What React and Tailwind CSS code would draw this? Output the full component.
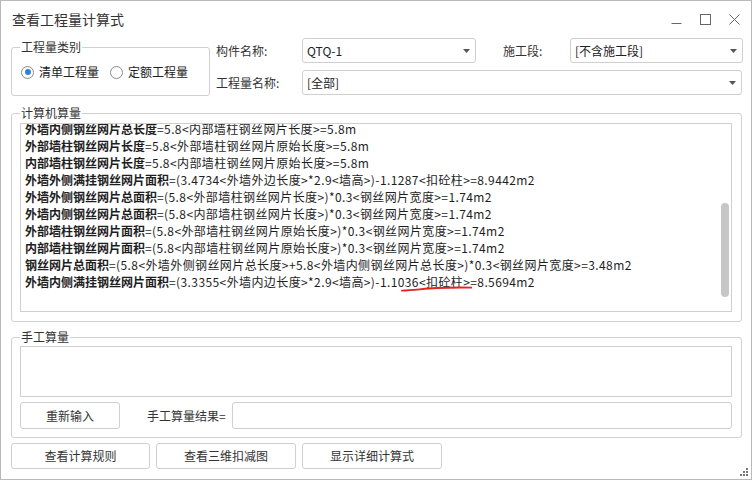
const FONT = { fontFamily: '"Noto Sans CJK SC", "Noto Sans", sans-serif' };

const lines = [
  ["外墙内侧钢丝网片总长度", "=5.8<内部墙柱钢丝网片长度>=5.8m"],
  ["外部墙柱钢丝网片长度", "=5.8<外部墙柱钢丝网片原始长度>=5.8m"],
  ["内部墙柱钢丝网片长度", "=5.8<内部墙柱钢丝网片原始长度>=5.8m"],
  ["外墙外侧满挂钢丝网片面积", "=(3.4734<外墙外边长度>*2.9<墙高>)-1.1287<扣砼柱>=8.9442m2"],
  ["外墙外侧钢丝网片总面积", "=(5.8<外部墙柱钢丝网片长度>)*0.3<钢丝网片宽度>=1.74m2"],
  ["外墙内侧钢丝网片总面积", "=(5.8<内部墙柱钢丝网片长度>)*0.3<钢丝网片宽度>=1.74m2"],
  ["外部墙柱钢丝网片面积", "=(5.8<外部墙柱钢丝网片原始长度>)*0.3<钢丝网片宽度>=1.74m2"],
  ["内部墙柱钢丝网片面积", "=(5.8<内部墙柱钢丝网片原始长度>)*0.3<钢丝网片宽度>=1.74m2"],
  ["钢丝网片总面积", "=(5.8<外墙外侧钢丝网片总长度>+5.8<外墙内侧钢丝网片总长度>)*0.3<钢丝网片宽度>=3.48m2"],
];

function Arrow() {
  return (
    <svg width="7" height="4" viewBox="0 0 7 4" className="mr-[4px]">
      <path d="M0 0 H7 L3.5 4 Z" fill="#555" />
    </svg>
  );
}

function Select({ value, className }) {
  return (
    <div className={"h-[25px] border border-[#cfcfcf] rounded-[3px] flex items-center justify-between pl-[4px] pr-[1px] text-[12px] text-[#222] " + className}>
      <span>{value}</span>
      <Arrow />
    </div>
  );
}

function Group({ title, className, children }) {
  return (
    <div className={"relative border border-[#d0d0d0] rounded-[3px] " + className}>
      <span className="absolute left-[8px] -top-[9px] bg-white px-[1px] text-[12px] leading-[16px] text-[#333]">{title}</span>
      {children}
    </div>
  );
}

function Radio({ checked, label }) {
  return (
    <label className="flex items-center gap-[5px]">
      <span className="w-[13px] h-[13px] rounded-full border border-[#8a8a8a] flex items-center justify-center bg-white">
        {checked && <span className="w-[6px] h-[6px] rounded-full bg-[#2f7fe0]" />}
      </span>
      <span>{label}</span>
    </label>
  );
}

function Btn({ children, className }) {
  return (
    <div className={"border border-[#cfcfcf] rounded-[3px] flex items-center justify-center text-[12px] text-[#333] " + className}>
      {children}
    </div>
  );
}

export default function App() {
  return (
    <div style={FONT} className="w-[752px] h-[480px] bg-white border border-[#b9b9b9] relative overflow-hidden text-[#333]">
      {/* title bar */}
      <div className="h-[37px] flex items-center justify-between pl-[11px] pr-[11px]">
        <span className="text-[14px] text-[#333] -mt-[1px]">查看工程量计算式</span>
        <div className="flex items-center gap-[18px] -mt-[1px]">
          <svg width="11" height="11" viewBox="0 0 11 11"><path d="M0.5 9.5 H10.5" stroke="#666" strokeWidth="1" /></svg>
          <svg width="11" height="11" viewBox="0 0 11 11"><rect x="0.5" y="0.5" width="10" height="10" fill="none" stroke="#666" strokeWidth="1" /></svg>
          <svg width="11" height="11" viewBox="0 0 11 11"><path d="M0.5 0.5 L10.5 10.5 M10.5 0.5 L0.5 10.5" stroke="#666" strokeWidth="1" /></svg>
        </div>
      </div>

      {/* top section */}
      <div className="flex items-start pl-[10px]">
        <Group title="工程量类别" className="mt-[9px] w-[199px] h-[49px]">
          <div className="flex items-center gap-[11px] pl-[9px] pt-[15px] text-[12px] text-[#222]">
            <Radio checked label="清单工程量" />
            <Radio label="定额工程量" />
          </div>
        </Group>
        <div className="ml-[6px] flex flex-col gap-[7px] text-[12px]">
          <div className="flex items-center">
            <span className="w-[86px]">构件名称:</span>
            <Select value="QTQ-1" className="w-[174px]" />
            <span className="ml-[27px] w-[67px]">施工段:</span>
            <Select value="[不含施工段]" className="w-[173px]" />
          </div>
          <div className="flex items-center">
            <span className="w-[86px]">工程量名称:</span>
            <Select value="[全部]" className="w-[440px]" />
          </div>
        </div>
      </div>

      {/* computer quantity */}
      <Group title="计算机算量" className="mt-[17px] ml-[10px] w-[731px] h-[209px] px-[8px] pt-[9px]">
        <div className="relative w-[712px] h-[189px] border border-[#cfcfcf] overflow-hidden">
          <div className="pl-[4px] -mt-[4px] text-[12px] leading-[17px] text-[#1e1e1e] whitespace-nowrap">
            {lines.map(([b, r], i) => (
              <div key={i}>
                <span className="font-bold">{b}</span>
                <span className="tracking-[0.4px]">{r}</span>
              </div>
            ))}
            <div>
              <span className="font-bold">外墙内侧满挂钢丝网片面积</span>
              <span className="tracking-[0.4px]">
                =(3.3355&lt;外墙内边长度&gt;*2.9&lt;墙高&gt;)-1.1
                <span className="relative">
                  036&lt;扣砼柱&gt;
                  <svg className="absolute left-[3px] top-[13px] w-[calc(100%-1px)] h-[6px]" viewBox="0 0 80 6" preserveAspectRatio="none">
                    <path d="M1 4.6 C 15 4.2, 25 2.6, 40 2 S 68 1.4, 79 1.6" fill="none" stroke="#e32222" strokeWidth="1.8" strokeLinecap="round" vectorEffect="non-scaling-stroke" />
                  </svg>
                </span>
                =8.5694m2
              </span>
            </div>
          </div>
          <div className="absolute left-[700px] top-[79px] w-[8px] h-[94px] rounded-full bg-[#c6c6c6]" />
        </div>
      </Group>

      {/* manual quantity */}
      <Group title="手工算量" className="mt-[15px] ml-[10px] w-[731px] h-[101px] px-[8px] pt-[8px]">
        <div className="w-[712px] h-[51px] border border-[#cfcfcf]" />
        <div className="flex items-center mt-[5px] text-[12px]">
          <Btn className="w-[100px] h-[27px]">重新输入</Btn>
          <span className="ml-[27px] w-[85px]">手工算量结果=</span>
          <div className="w-[500px] h-[27px] border border-[#cfcfcf] rounded-[3px]" />
        </div>
      </Group>

      {/* bottom buttons */}
      <div className="flex gap-[6px] mt-[5px] ml-[10px]">
        <Btn className="w-[139px] h-[26px]">查看计算规则</Btn>
        <Btn className="w-[140px] h-[26px]">查看三维扣减图</Btn>
        <Btn className="w-[140px] h-[26px]">显示详细计算式</Btn>
      </div>

      <svg className="absolute right-[2px] bottom-[2px]" width="9" height="9" viewBox="0 0 9 9">
        <rect x="6" y="0" width="2" height="2" fill="#777" />
        <rect x="3" y="3" width="2" height="2" fill="#777" />
        <rect x="6" y="3" width="2" height="2" fill="#777" />
        <rect x="0" y="6" width="2" height="2" fill="#777" />
        <rect x="3" y="6" width="2" height="2" fill="#777" />
        <rect x="6" y="6" width="2" height="2" fill="#777" />
      </svg>
    </div>
  );
}
